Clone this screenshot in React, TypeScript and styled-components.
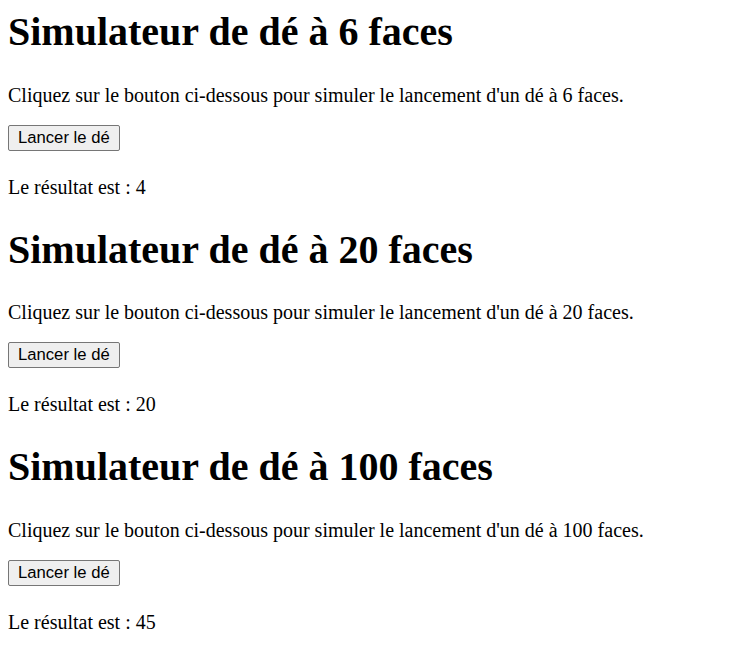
import React, { useState } from "react";
import styled, { createGlobalStyle } from "styled-components";

const Global = createGlobalStyle`
  body {
    margin: 8px;
    font-family: "Liberation Serif", "Times New Roman", serif;
    font-size: 20px;
    color: #000;
    background: #fff;
  }
`;

const Title = styled.h1<{ $first?: boolean }>`
  font-size: 40px;
  font-weight: bold;
  margin: ${(p) => (p.$first ? "0" : "26.8px")} 0 28.8px;
`;

const Intro = styled.p`
  margin: 0 0 18px;
`;

const Result = styled.p`
  margin: 25px 0 20px;
`;

const RollButton = styled.button`
  font-family: "Liberation Sans", Arial, sans-serif;
  font-size: 16.67px;
  height: 26px;
  padding: 0 9px;
  border: 1px solid #767676;
  border-radius: 2px;
  background: #efefef;
  color: #000;
`;

type DieProps = { faces: number; initial: number; first?: boolean };

function Die({ faces, initial, first }: DieProps) {
  const [result, setResult] = useState(initial);
  return (
    <section>
      <Title $first={first}>Simulateur de dé à {faces} faces</Title>
      <Intro>
        Cliquez sur le bouton ci-dessous pour simuler le lancement d'un dé à {faces} faces.
      </Intro>
      <RollButton onClick={() => setResult(1 + Math.floor(Math.random() * faces))}>
        Lancer le dé
      </RollButton>
      <Result>Le résultat est : {result}</Result>
    </section>
  );
}

export default function App() {
  return (
    <>
      <Global />
      <Die faces={6} initial={4} first />
      <Die faces={20} initial={20} />
      <Die faces={100} initial={45} />
    </>
  );
}
